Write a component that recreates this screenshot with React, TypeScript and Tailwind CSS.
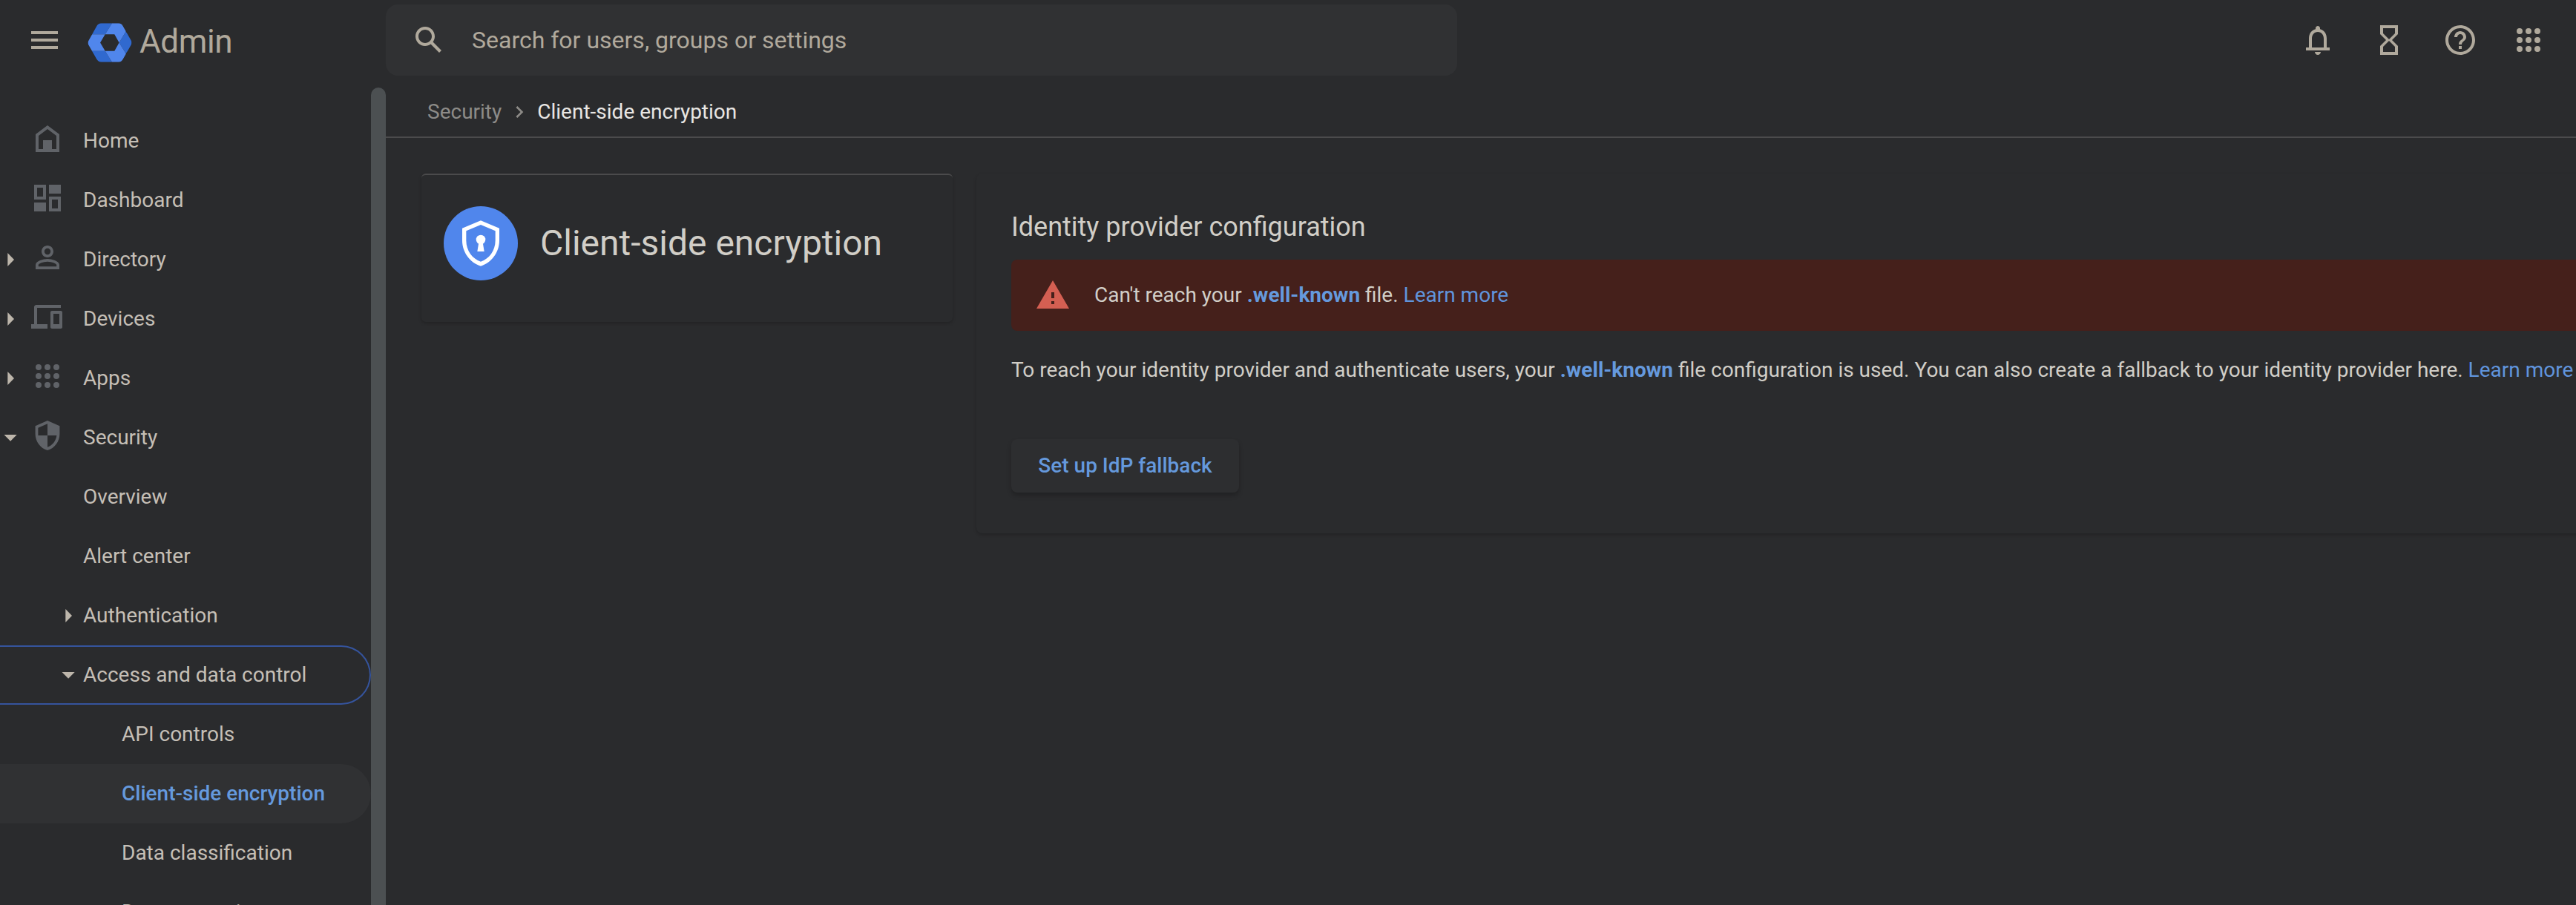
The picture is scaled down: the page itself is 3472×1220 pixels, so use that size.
import type { ReactNode } from "react";

function Icon({ d, className = "size-12", children }: { d?: string; className?: string; children?: ReactNode }) {
  return (
    <svg viewBox="0 0 24 24" className={`shrink-0 fill-current ${className}`} aria-hidden="true">
      {d && <path d={d} fillRule="evenodd" />}
      {children}
    </svg>
  );
}

const paths = {
  menu: "M3 18h18v-2H3v2zm0-5h18v-2H3v2zm0-7v2h18V6H3z",
  search:
    "M20.49 19l-5.73-5.73C15.53 12.2 16 10.91 16 9.5 16 5.91 13.09 3 9.5 3S3 5.91 3 9.5 5.91 16 9.5 16c1.41 0 2.7-.47 3.77-1.24L19 20.49 20.49 19zM5 9.5C5 7.01 7.01 5 9.5 5S14 7.01 14 9.5 11.99 14 9.5 14 5 11.99 5 9.5z",
  bell: "M18 17v-6c0-3.07-1.63-5.64-4.5-6.32V4c0-.83-.67-1.5-1.5-1.5s-1.5.67-1.5 1.5v.68C7.64 5.36 6 7.92 6 11v6H4v2h16v-2h-2zm-2 0H8v-6c0-2.48 1.51-4.5 4-4.5s4 2.02 4 4.5v6zm-4 5c1.1 0 2-.9 2-2h-4c0 1.1.9 2 2 2z",
  hourglass:
    "M6 2v6l4 4-4 4v6h12v-6l-4-4 4-4V2H6zm10 14.5V20H8v-3.5l4-4 4 4zm-4-5l-4-4V4h8v3.5l-4 4z",
  help: "M11 18h2v-2h-2v2zm1-16C6.48 2 2 6.48 2 12s4.48 10 10 10 10-4.48 10-10S17.52 2 12 2zm0 18c-4.41 0-8-3.59-8-8s3.59-8 8-8 8 3.59 8 8-3.59 8-8 8zm0-14c-2.21 0-4 1.79-4 4h2c0-1.1.9-2 2-2s2 .9 2 2c0 2-3 1.75-3 5h2c0-2.25 3-2.5 3-5 0-2.21-1.79-4-4-4z",
  apps: "M6 8a2 2 0 1 0 0-4 2 2 0 0 0 0 4zm6 0a2 2 0 1 0 0-4 2 2 0 0 0 0 4zm6 0a2 2 0 1 0 0-4 2 2 0 0 0 0 4zM6 14a2 2 0 1 0 0-4 2 2 0 0 0 0 4zm6 0a2 2 0 1 0 0-4 2 2 0 0 0 0 4zm6 0a2 2 0 1 0 0-4 2 2 0 0 0 0 4zM6 20a2 2 0 1 0 0-4 2 2 0 0 0 0 4zm6 0a2 2 0 1 0 0-4 2 2 0 0 0 0 4zm6 0a2 2 0 1 0 0-4 2 2 0 0 0 0 4z",
  home: "M12 3l8 6v12H4V9l8-6zm0 2.5L6 10v9h3v-6h6v6h3v-9l-6-4.5z",
  dashboard: "M3 3h8v10H3V3zm2 2v6h4V5H5zm8-2h8v6h-8V3zM3 15h8v6H3v-6zm10-4h8v10h-8V11zm2 2v6h4v-6h-4z",
  person:
    "M12 5.9a2.1 2.1 0 1 1 0 4.2 2.1 2.1 0 0 1 0-4.2m0 9c2.97 0 6.1 1.46 6.1 2.1v1.1H5.9V17c0-.64 3.13-2.1 6.1-2.1M12 4C9.79 4 8 5.79 8 8s1.79 4 4 4 4-1.79 4-4-1.79-4-4-4zm0 9c-2.67 0-8 1.34-8 4v3h16v-3c0-2.66-5.33-4-8-4z",
  devices:
    "M3 17V5.5C3 4.67 3.67 4 4.5 4H21v2H5v11h7v3H1v-3h2zM15 8h6c.55 0 1 .45 1 1v10c0 .55-.45 1-1 1h-6c-.55 0-1-.45-1-1V9c0-.55.45-1 1-1zm1 2v7h4v-7h-4z",
  shield:
    "M12 2l8.2 3.6V11c0 5.1-3.4 9.7-8.2 11-4.8-1.3-8.2-5.9-8.2-11V5.6L12 2zm0 2.1L5.7 6.9V12H12V4.1zM12 12v7.9c3.2-1 5.7-4.2 6.2-7.9H12z",
  chevron: "M10 6L8.59 7.41 13.17 12l-4.58 4.59L10 18l6-6z",
  warning: "M1 21h22L12 2 1 21zm12-3h-2v-2h2v2zm0-4h-2v-4h2v4z",
};

function AdminLogo() {
  return (
    <svg viewBox="264 34 180 160" className="mt-[7px] h-[53px] w-[60px] shrink-0" aria-hidden="true">
      <defs>
        <clipPath id="hex">
          <path d="M267 107L301 46Q308 35 320 35H389Q401 35 407 46L441 106Q445 114 441 122L407 182Q401 193 389 193H320Q308 193 301 182L267 122Q263 114 267 107Z" />
        </clipPath>
      </defs>
      <g clipPath="url(#hex)">
        <path fill="#3069cf" d="M280 80L260 30H366L335 80ZM419 69L460 114L419 158L392 114ZM366 198H260L280 148H335Z" />
        <path
          fill="#5086ec"
          d="M366 30H440L419 69L392 114L373 80H335ZM419 158L440 198H366L335 148H373L392 114ZM281 148L255 148V80H335L315 114L335 148Z"
        />
      </g>
    </svg>
  );
}

type Item = {
  label: string;
  icon?: string;
  arrow?: "right" | "down";
  level: 0 | 1 | 2;
  focused?: boolean;
  selected?: boolean;
};

const items: Item[] = [
  { label: "Home", icon: paths.home, level: 0 },
  { label: "Dashboard", icon: paths.dashboard, level: 0 },
  { label: "Directory", icon: paths.person, arrow: "right", level: 0 },
  { label: "Devices", icon: paths.devices, arrow: "right", level: 0 },
  { label: "Apps", icon: paths.apps, arrow: "right", level: 0 },
  { label: "Security", icon: paths.shield, arrow: "down", level: 0 },
  { label: "Overview", level: 1 },
  { label: "Alert center", level: 1 },
  { label: "Authentication", arrow: "right", level: 1 },
  { label: "Access and data control", arrow: "down", level: 1, focused: true },
  { label: "API controls", level: 2 },
  { label: "Client-side encryption", level: 2, selected: true },
  { label: "Data classification", level: 2 },
  { label: "Data protection", level: 2 },
];

function Arrow({ dir }: { dir?: "right" | "down" }) {
  return (
    <svg viewBox="0 0 28 28" className="size-7 shrink-0 fill-[#bdb6ab]" aria-hidden="true">
      {dir === "right" && <path d="M10.3 5V23L19 14Z" />}
      {dir === "down" && <path d="M5.5 10H22.7L14.1 18.8Z" />}
    </svg>
  );
}

function NavItem({ item }: { item: Item }) {
  const frame = item.focused
    ? "border-y-2 border-r-2 border-[#35549d]"
    : item.selected
      ? "bg-[#303133]"
      : "";
  return (
    <li className={`flex h-20 shrink-0 items-center rounded-r-[40px] ${frame}`}>
      {item.level === 0 && (
        <>
          <Arrow dir={item.arrow} />
          <Icon d={item.icon} className="mb-1.5 ml-3 mr-6 size-12 text-[#606368]" />
        </>
      )}
      {item.level === 1 && (
        <span className="flex w-28 shrink-0 pl-[78px]">
          <Arrow dir={item.arrow} />
        </span>
      )}
      {item.level === 2 && <span className="w-[164px] shrink-0" />}
      <span className={`whitespace-nowrap ${item.selected ? "font-medium text-[#6599dd]" : "text-[#c5bfb6]"}`}>{item.label}</span>
    </li>
  );
}

function Header() {
  return (
    <header className="flex h-[108px] shrink-0 items-center text-[#b0a99c]">
      <div className="flex w-[520px] shrink-0 items-center pl-9">
        <Icon d={paths.menu} />
        <div className="ml-[34px] flex items-center">
          <AdminLogo />
          <span className="ml-2.5 mt-1 text-[44px] leading-none tracking-[-0.4px]">Admin</span>
        </div>
      </div>
      <div className="flex h-24 w-[1444px] items-center rounded-2xl bg-[#303133] pl-[34px]">
        <Icon d={paths.search} />
        <span className="ml-[34px] text-[32px]">Search for users, groups or settings</span>
      </div>
      <div className="ml-auto flex items-center pr-10">
        <Icon d={paths.bell} />
        <Icon d={paths.hourglass} className="ml-12 size-12" />
        <Icon d={paths.help} className="ml-12 size-12" />
        <Icon d={paths.apps} className="ml-11 size-12" />
      </div>
    </header>
  );
}

export default function App() {
  return (
    <div className="flex h-[1220px] w-[3472px] flex-col overflow-hidden bg-[#2a2b2d] font-['Roboto',sans-serif] text-[28px] leading-10 text-[#d1cec7]">
      <Header />
      <div className="flex min-h-0 flex-1">
        <nav className="w-[500px] shrink-0 overflow-hidden pt-[42px]">
          <ul className="flex flex-col">
            {items.map((item, i) => (
              <NavItem key={i} item={item} />
            ))}
          </ul>
        </nav>
        <div className="mt-2.5 w-5 shrink-0 rounded-t-[10px] bg-[#4c5052]" />
        <main className="min-w-0 flex-1">
          <div className="flex h-[78px] items-center border-b-2 border-[#4b4b4c] pl-14 pt-2.5">
            <span className="text-[#8d8b88]">Security</span>
            <Icon d={paths.chevron} className="ml-2 size-8 text-[#8d8b88]" />
            <span className="ml-2 text-[#e8e6e3]">Client-side encryption</span>
          </div>
          <div className="flex items-start pl-12 pt-12">
            <section className="flex h-[200px] w-[716px] shrink-0 items-start rounded-md border-t-2 border-[#4b4b4c] pl-[30px] pt-[42px] shadow-[0_2px_4px_rgba(0,0,0,0.2)]">
              <svg viewBox="24 24 300 300" className="size-[100px] shrink-0" aria-hidden="true">
                <circle cx="174" cy="174" r="150" fill="#5086ec" />
                <path
                  fill="#fff"
                  fillRule="evenodd"
                  d="M174 82L249 113V163C249 210 217 254 174 266C131 254 99 210 99 163V113ZM174 99L115 124V163C115 203 140 238 174 248C208 238 233 203 233 163V124Z"
                />
                <circle cx="174" cy="159" r="19" fill="#fff" />
                <path fill="#fff" d="M166 170H182L188 207H160Z" />
              </svg>
              <h1 className="ml-[30px] mt-[22px] whitespace-nowrap text-[48px] leading-[56px]">Client-side encryption</h1>
            </section>
            <section className="ml-8 h-[485px] w-[2200px] shrink-0 rounded-lg pl-[47px] pt-[48px] shadow-[0_2px_4px_rgba(0,0,0,0.2)]">
              <h2 className="text-[36px] leading-[48px]">Identity provider configuration</h2>
              <div className="mt-5 flex h-24 items-center rounded-lg bg-[#45201b] pl-8">
                <Icon d={paths.warning} className="size-12 text-[#d45f52]" />
                <p className="ml-8 whitespace-nowrap">
                  Can't reach your <b className="font-bold text-[#6599dd]">.well-known</b> file. <a className="text-[#6094dc]">Learn more</a>
                </p>
              </div>
              <p className="mt-[33px] whitespace-nowrap">
                To reach your identity provider and authenticate users, your{" "}
                <b className="font-bold text-[#6599dd]">.well-known</b> file configuration is used. You can also create a
                fallback to your identity provider here. <a className="text-[#6094dc]">Learn more</a>
              </p>
              <button className="mt-[73px] h-[72px] w-[307px] rounded-lg bg-[#2d2e30] font-medium text-[#6599dd] shadow-[0_4px_6px_rgba(0,0,0,0.22)]">
                Set up IdP fallback
              </button>
            </section>
          </div>
        </main>
      </div>
    </div>
  );
}
